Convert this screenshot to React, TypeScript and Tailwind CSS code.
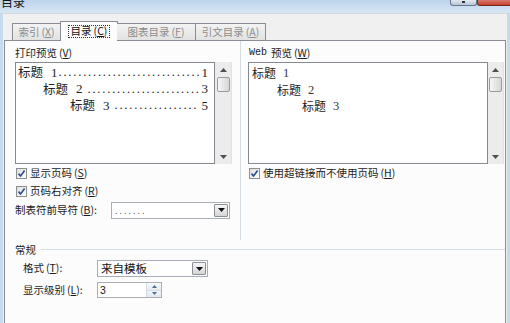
import React from "react";

const cjk = "font-['Noto_Sans_CJK_SC','Liberation_Sans',sans-serif]";
const serif = "font-['Liberation_Serif',serif]";
const DOTS = ".".repeat(80);

function M({ k }: { k: string }) {
  return (
    <span className="ml-[2px]">
      (<span className="underline underline-offset-[1px]">{k}</span>)
    </span>
  );
}

function Check({ label, k }: { label: string; k: string }) {
  return (
    <div className="flex items-center h-[13px]">
      <div className="ml-[1px] w-[11px] h-[11px] border border-[#8e8f8f] bg-linear-to-br from-[#dedede] to-white flex items-center justify-center">
        <svg width="9" height="9" viewBox="0 0 9 9">
          <path d="M1.5 4.6 L3.6 7 L7.6 1.6" stroke="#2b4d8f" strokeWidth="1.6" fill="none" />
        </svg>
      </div>
      <span className="ml-[3px] text-[10.5px] leading-none whitespace-nowrap">
        {label}
        <M k={k} />
      </span>
    </div>
  );
}

function ScrollBar({ w }: { w: string }) {
  return (
    <div className={`${w} shrink-0 h-full bg-[#ececec] flex flex-col items-center border-r border-[#e2e2e2]`}>
      <div className="h-[15px] w-full flex items-center justify-center">
        <svg width="7" height="4" viewBox="0 0 7 4">
          <path d="M0 4 L3.5 0 L7 4Z" fill="#505050" />
        </svg>
      </div>
      <div className="w-[13px] h-[15px] rounded-[2px] border border-[#9a9a9a] bg-linear-to-r from-[#f6f6f6] to-[#d6d6d6]" />
      <div className="flex-1" />
      <div className="h-[14px] w-full flex items-center justify-center">
        <svg width="7" height="4" viewBox="0 0 7 4">
          <path d="M0 0 L7 0 L3.5 4Z" fill="#505050" />
        </svg>
      </div>
    </div>
  );
}

function TocRow({ pl, n, p, gap }: { pl: string; n: string; p: string; gap: string }) {
  return (
    <div className={`flex items-center h-[16.5px] ${pl} pr-[6px]`}>
      <span className="text-[12.5px] leading-none shrink-0">标题</span>
      <span className={`ml-[8px] text-[13px] leading-none shrink-0 ${serif}`}>{n}</span>
      <span className={`flex-1 min-w-0 mr-[3px] overflow-hidden whitespace-nowrap text-[12.5px] leading-none tracking-[1.8px] ${serif} ${gap}`}>
        {DOTS}
      </span>
      <span className={`text-[13px] leading-none shrink-0 ${serif}`}>{p}</span>
    </div>
  );
}

function WebRow({ pl, n }: { pl: string; n: string }) {
  return (
    <div className={`flex items-center h-[16.5px] ${pl}`}>
      <span className="text-[12px] leading-none">标题</span>
      <span className={`ml-[7px] text-[12.5px] leading-none text-[#333] ${serif}`}>{n}</span>
    </div>
  );
}

function DropBtn() {
  return (
    <div className="w-[14px] shrink-0 my-[1px] mr-[1px] border border-[#8a8f96] rounded-[1px] bg-linear-to-b from-[#f6f6f6] to-[#d6d6d6] flex items-center justify-center">
      <svg width="7" height="4" viewBox="0 0 7 4">
        <path d="M0 0 L7 0 L3.5 4Z" fill="#111" />
      </svg>
    </div>
  );
}

export default function App() {
  return (
    <div className={`w-[510px] h-[323px] overflow-hidden flex flex-col bg-[#f0f0f0] text-[#1b1b1b] ${cjk}`}>
      {/* title bar */}
      <div className="h-[13px] flex bg-linear-to-b from-[#bdd4ec] to-[#d8e6f4]">
        <span className="ml-[1px] -mt-[4px] text-[12px] leading-[12px] text-[#111]">目录</span>
        <div className="ml-auto flex">
          <div className="w-[27px] h-[6px] rounded-b-[3px] border border-t-0 border-[#66788e] bg-linear-to-b from-[#e3e9f0] to-[#b8c6d5] flex justify-center">
            <div className="w-[3px] h-[2px] mt-[1px] bg-[#333]" />
          </div>
          <div className="w-[33px] h-[6px] rounded-bl-[3px] border border-t-0 border-r-0 border-[#7a2a20] bg-linear-to-b from-[#db7a6c] to-[#c23f2b]" />
        </div>
      </div>

      {/* body */}
      <div className="flex-1 flex min-h-0">
        <div className="w-[3px] bg-[#c8dbee]" />
        <div className="flex-1 flex flex-col border-t border-[#d8d8d8] pt-[7px] min-w-0">
          {/* tabs */}
          <div className="flex items-end h-[19px] pl-[9px] relative z-10">
            <div className="w-[49px] h-[17px] border border-b-0 border-[#898c95] bg-linear-to-b from-[#f3f3f3] to-[#e2e2e2] flex items-center justify-center text-[10.5px] text-[#8c8c8c] leading-none">
              索引<M k="X" />
            </div>
            <div className="w-[58px] h-[20px] -mb-px -mx-px border border-b-0 border-[#898c95] bg-[#fcfcfc] flex items-center justify-center">
              <div className="border border-dotted border-[#333] px-[2px] h-[13px] flex items-center text-[10.5px] leading-none text-[#111]">
                目录<M k="C" />
              </div>
            </div>
            <div className="w-[79px] h-[17px] border border-b-0 border-l-0 border-[#898c95] bg-linear-to-b from-[#f3f3f3] to-[#e2e2e2] flex items-center justify-center text-[10.5px] text-[#8c8c8c] leading-none">
              图表目录<M k="F" />
            </div>
            <div className="w-[70px] h-[17px] border border-b-0 border-l-0 border-[#898c95] bg-linear-to-b from-[#f3f3f3] to-[#e2e2e2] flex items-center justify-center text-[10.5px] text-[#8c8c8c] leading-none">
              引文目录<M k="A" />
            </div>
          </div>

          {/* panel */}
          <div className="flex-1 mx-[1px] border border-b-0 border-[#898c95] bg-[#fcfcfc] flex flex-col pl-[10px]">
            <div className="flex h-[199px]">
              {/* left column */}
              <div className="w-[217px] shrink-0 pt-[5px] flex flex-col">
                <div className="h-[13px] leading-[13px] text-[10.5px]">
                  打印预览<M k="V" />
                </div>
                <div className="mt-[3px] h-[102px] flex">
                  <div className="flex-1 min-w-0 border border-[#86898f] bg-white pt-[1px] text-[#222]">
                    <TocRow pl="pl-[2px]" n="1" p="1" gap="ml-[1px]" />
                    <TocRow pl="pl-[27px]" n="2" p="3" gap="ml-[5px]" />
                    <TocRow pl="pl-[54px]" n="3" p="5" gap="ml-[5px]" />
                  </div>
                  <ScrollBar w="w-[17px]" />
                </div>
                <div className="mt-[3px]">
                  <Check label="显示页码" k="S" />
                </div>
                <div className="mt-[5px]">
                  <Check label="页码右对齐" k="R" />
                </div>
                <div className="mt-[3px] h-[18px] flex items-center">
                  <div className="w-[96px] text-[10.5px] leading-none whitespace-nowrap">
                    制表符前导符<M k="B" />:
                  </div>
                  <div className="w-[119px] h-[17px] border border-[#a9adb5] bg-white flex">
                    <div className={`flex-1 pl-[3px] flex items-center text-[10px] tracking-[2px] text-[#555] ${serif}`}>.......</div>
                    <DropBtn />
                  </div>
                </div>
              </div>

              {/* separator */}
              <div className="ml-[8px] w-px shrink-0 bg-[#d5dde3]" />

              {/* right column */}
              <div className="ml-[7px] w-[256px] shrink-0 pt-[5px] flex flex-col">
                <div className="h-[13px] leading-[13px] text-[10.5px] pl-[1px] flex items-center">
                  <span className="font-['Liberation_Mono',monospace] text-[10px]">Web</span>
                  <span className="ml-[4px]">预览</span>
                  <M k="W" />
                </div>
                <div className="mt-[3px] h-[102px] flex">
                  <div className="w-[240px] shrink-0 border border-[#86898f] bg-white pt-[2px] text-[#222]">
                    <WebRow pl="pl-[3px]" n="1" />
                    <WebRow pl="pl-[28px]" n="2" />
                    <WebRow pl="pl-[53px]" n="3" />
                  </div>
                  <ScrollBar w="w-[16px]" />
                </div>
                <div className="mt-[3px]">
                  <Check label="使用超链接而不使用页码" k="H" />
                </div>
              </div>
            </div>

            {/* general group */}
            <div className="mt-[4px] h-[12px] flex items-center">
              <span className="text-[10.5px] leading-none">常规</span>
              <div className="flex-1 ml-[5px] h-[2px] border-t border-[#d5dde3] border-b border-b-white" />
            </div>
            <div className="mt-[4px] h-[17px] flex items-center pl-[8px]">
              <div className="w-[74px] text-[10.5px] leading-none whitespace-nowrap">
                格式<M k="T" />:
              </div>
              <div className="w-[111px] h-[17px] border border-[#a9adb5] bg-white flex">
                <div className="flex-1 pl-[3px] flex items-center text-[11.5px] leading-none text-[#111]">来自模板</div>
                <DropBtn />
              </div>
            </div>
            <div className="mt-[5px] h-[16px] flex items-center pl-[8px]">
              <div className="w-[74px] text-[10.5px] leading-none whitespace-nowrap">
                显示级别<M k="L" />:
              </div>
              <div className="w-[65px] h-[16px] border border-[#abadb3] bg-white flex">
                <div className="flex-1 pl-[2px] flex items-center text-[10.5px] leading-none font-['Liberation_Sans',sans-serif]">3</div>
                <div className="w-[15px] flex flex-col border-l border-[#d4dbe3]">
                  <div className="flex-1 flex items-center justify-center bg-linear-to-b from-[#f7f9fb] to-[#e6ebf0] border-b border-[#d4dbe3]">
                    <svg width="5" height="3" viewBox="0 0 5 3">
                      <path d="M0 3 L2.5 0 L5 3Z" fill="#4a6f97" />
                    </svg>
                  </div>
                  <div className="flex-1 flex items-center justify-center bg-linear-to-b from-[#f2f5f8] to-[#e2e8ee]">
                    <svg width="5" height="3" viewBox="0 0 5 3">
                      <path d="M0 0 L5 0 L2.5 3Z" fill="#4a6f97" />
                    </svg>
                  </div>
                </div>
              </div>
            </div>
          </div>
        </div>
        <div className="w-[3px] bg-[#c8dbee]" />
      </div>
    </div>
  );
}
